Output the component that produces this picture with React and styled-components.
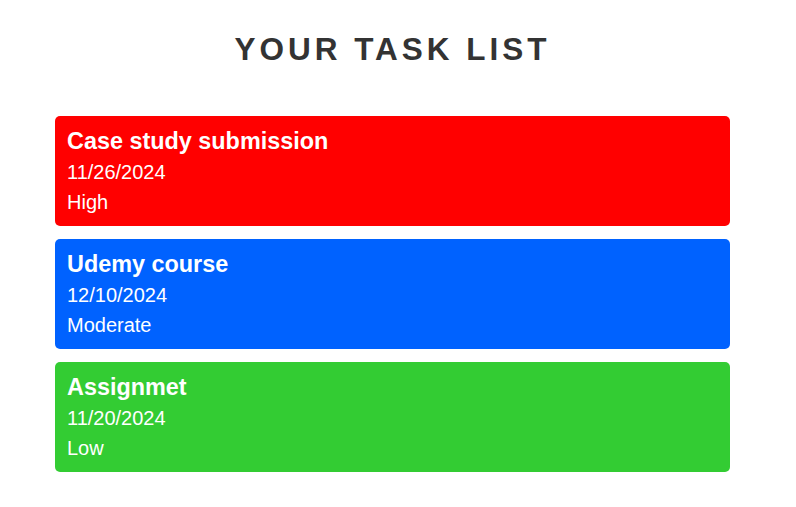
import React from "react";
import styled, { createGlobalStyle } from "styled-components";

const GlobalStyle = createGlobalStyle`
  body {
    margin: 0;
    background: #ffffff;
    font-family: "Liberation Sans", Arial, sans-serif;
  }
`;

const Page = styled.div`
  display: flex;
  flex-direction: column;
  padding: 0 66px 0 55px;
`;

const Heading = styled.h1`
  margin: 31px 0 49px;
  text-align: center;
  font-size: 31.5px;
  font-weight: 700;
  letter-spacing: 4px;
  color: #333333;
  line-height: 36px;
`;

const TaskList = styled.div`
  display: flex;
  flex-direction: column;
  gap: 13px;
`;

const TaskCard = styled.div`
  display: flex;
  flex-direction: column;
  height: 110px;
  box-sizing: border-box;
  padding: 9px 12px;
  border-radius: 5px;
  background-color: ${(props) => props.color};
  color: #ffffff;
`;

const TaskTitle = styled.div`
  font-size: 23.4px;
  font-weight: 700;
  line-height: 32px;
`;

const TaskText = styled.div`
  font-size: 20px;
  line-height: 30px;
`;

const tasks = [
  { title: "Case study submission", date: "11/26/2024", priority: "High", color: "#ff0000" },
  { title: "Udemy course", date: "12/10/2024", priority: "Moderate", color: "#0062ff" },
  { title: "Assignmet", date: "11/20/2024", priority: "Low", color: "#33cc33" }
];

function App() {
  return (
    <>
      <GlobalStyle />
      <Page>
        <Heading>YOUR TASK LIST</Heading>
        <TaskList>
          {tasks.map((task) => (
            <TaskCard key={task.title} color={task.color}>
              <TaskTitle>{task.title}</TaskTitle>
              <TaskText>{task.date}</TaskText>
              <TaskText>{task.priority}</TaskText>
            </TaskCard>
          ))}
        </TaskList>
      </Page>
    </>
  );
}

export default App;
